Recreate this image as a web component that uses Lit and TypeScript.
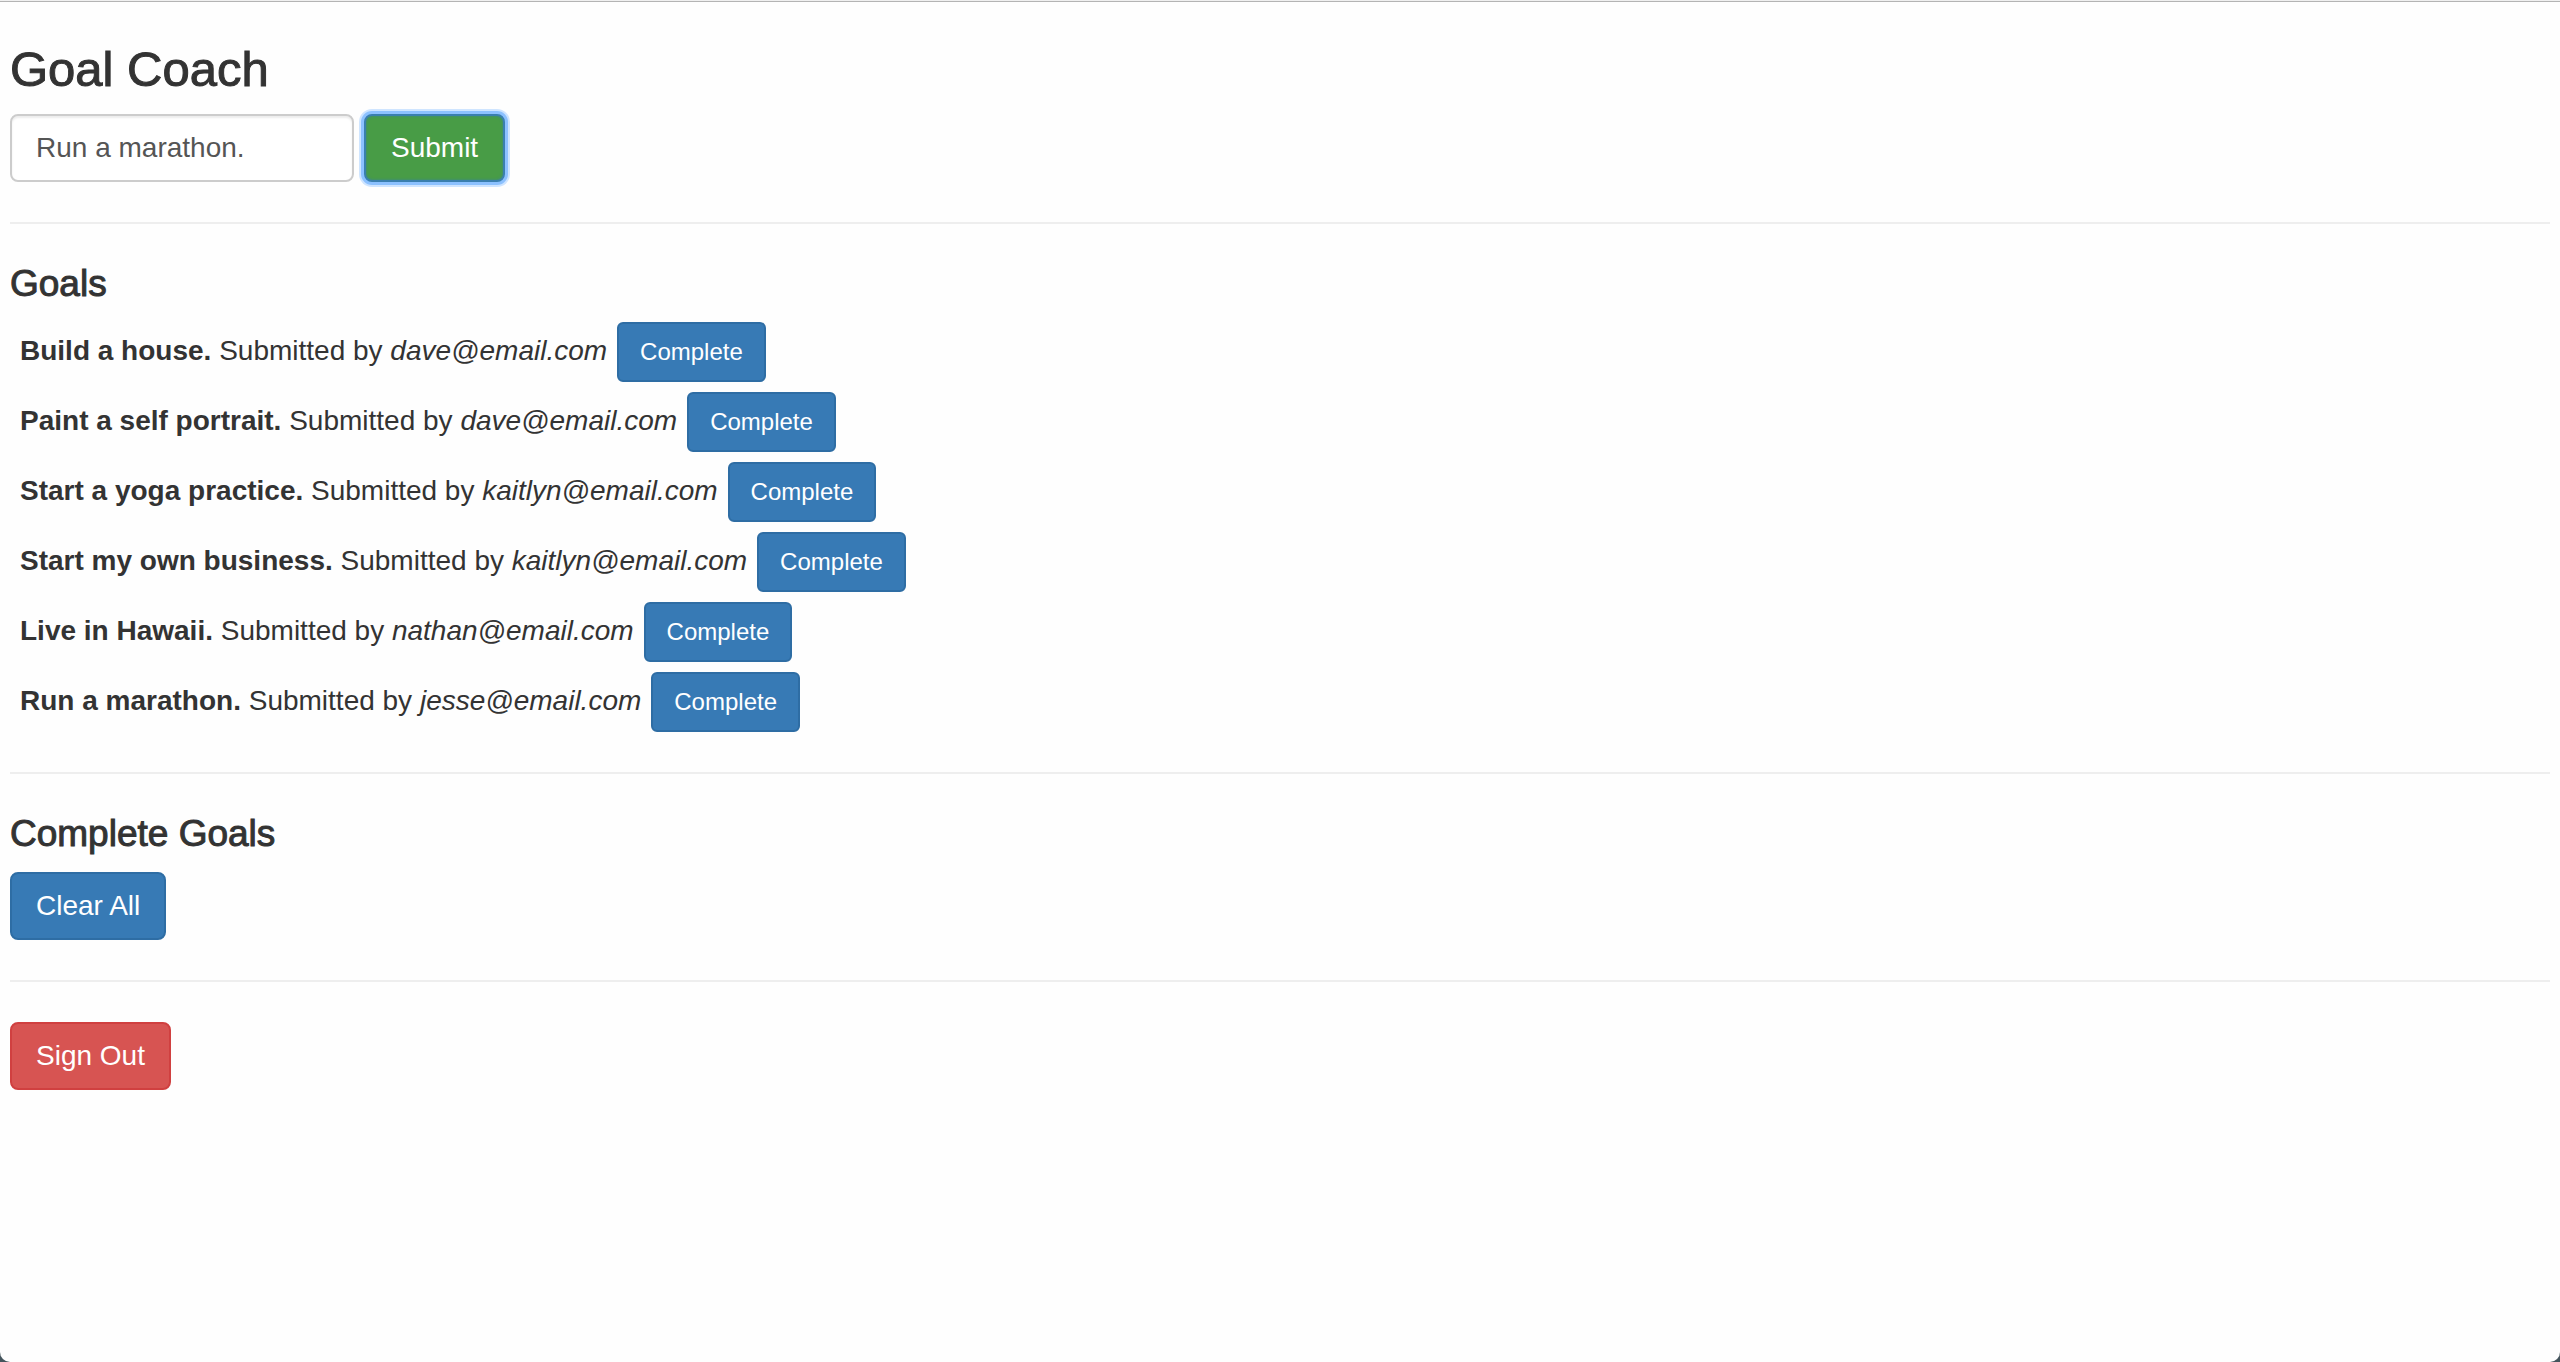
import { LitElement, html, css } from "lit";
import { customElement, state } from "lit/decorators.js";

interface Goal {
  title: string;
  email: string;
}

@customElement("app-root")
export class AppRoot extends LitElement {
  static styles = css`
    :host {
      display: block;
      background: #44545c;
      color: #333;
      font: 28px/40px "Helvetica Neue", Helvetica, "Liberation Sans", Arial, sans-serif;
    }
    .page {
      box-sizing: border-box;
      min-height: 100vh;
      padding: 41px 10px 40px;
      border-top: 1px solid #f0f0f0;
      border-radius: 0 0 10px 10px;
      background: #fefefe;
      box-shadow: inset 0 1px 0 #b4b4b4;
    }
    .title,
    .heading {
      margin: 0 0 18px;
      font-weight: 400;
      -webkit-text-stroke: 1px #333;
    }
    .title {
      font-size: 49px;
      line-height: 54px;
    }
    .heading {
      font-size: 37px;
      line-height: 40px;
    }
    .form {
      display: flex;
      gap: 10px;
    }
    .field {
      box-sizing: border-box;
      width: 344px;
      padding: 12px 24px;
      border: 2px solid #ccc;
      border-radius: 8px;
      background: #fff;
      box-shadow: inset 0 2px 2px rgba(0, 0, 0, 0.075);
      color: #555;
      font: inherit;
      outline: none;
    }
    .rule {
      height: 0;
      margin: 40px 0;
      border: 0;
      border-top: 2px solid #eee;
    }
    .btn {
      padding: 12px 24px;
      border: 2px solid #2e6da4;
      border-radius: 8px;
      background: #377ab5;
      color: #fff;
      font: inherit;
      cursor: pointer;
    }
    .submit {
      padding: 12px 25px;
      border-color: #3a7fae;
      background: #489c46;
      box-shadow:
        inset 0 0 3px #3a8595,
        0 0 0 3px #8cc1ff,
        0 0 0 5px #cfe5ff;
      outline: none;
    }
    .danger {
      border-color: #d04040;
      background: #d75452;
    }
    .small {
      padding: 10px 21px;
      border-radius: 6px;
      font-size: 24px;
      line-height: 36px;
    }
    .goals {
      display: flex;
      flex-direction: column;
      gap: 10px;
      margin: 0;
      padding: 0 10px;
      list-style: none;
    }
    .goal {
      display: flex;
      align-items: baseline;
      gap: 10px;
    }
  `;

  @state() private draft = "Run a marathon.";

  @state() private goals: Goal[] = [
    { title: "Build a house.", email: "dave@email.com" },
    { title: "Paint a self portrait.", email: "dave@email.com" },
    { title: "Start a yoga practice.", email: "kaitlyn@email.com" },
    { title: "Start my own business.", email: "kaitlyn@email.com" },
    { title: "Live in Hawaii.", email: "nathan@email.com" },
    { title: "Run a marathon.", email: "jesse@email.com" },
  ];

  private submit(event: Event) {
    event.preventDefault();
    if (this.draft) {
      this.goals = [...this.goals, { title: this.draft, email: "jesse@email.com" }];
    }
  }

  private complete(goal: Goal) {
    this.goals = this.goals.filter((item) => item !== goal);
  }

  render() {
    return html`
      <main class="page">
        <h1 class="title">Goal Coach</h1>
        <form class="form" @submit=${this.submit}>
          <input
            class="field"
            type="text"
            aria-label="Goal"
            .value=${this.draft}
            @input=${(e: Event) => (this.draft = (e.target as HTMLInputElement).value)}
          />
          <button class="btn submit" type="submit">Submit</button>
        </form>
        <hr class="rule" />
        <h2 class="heading">Goals</h2>
        <ul class="goals">
          ${this.goals.map(
            (goal) => html`
              <li class="goal">
                <span><strong>${goal.title}</strong> Submitted by <em>${goal.email}</em></span>
                <button class="btn small" type="button" @click=${() => this.complete(goal)}>Complete</button>
              </li>
            `,
          )}
        </ul>
        <hr class="rule" />
        <h2 class="heading">Complete Goals</h2>
        <button class="btn" type="button">Clear All</button>
        <hr class="rule" />
        <button class="btn danger" type="button">Sign Out</button>
      </main>
    `;
  }
}
